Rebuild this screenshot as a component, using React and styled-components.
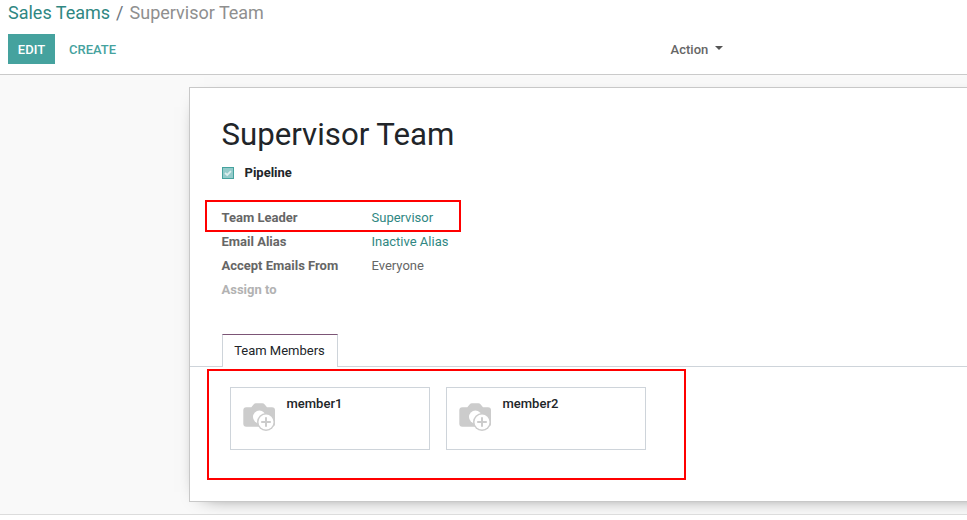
import React from "react";
import styled, { createGlobalStyle } from "styled-components";

const GlobalStyle = createGlobalStyle`
  *, *::before, *::after { box-sizing: border-box; }
  body {
    margin: 0;
    overflow: hidden;
    background: #fff;
    color: #666;
    font: 400 13px/20px Roboto, "Open Sans", sans-serif;
  }
`;

const Page = styled.div`
  height: 520px;
  display: flex;
  flex-direction: column;
  overflow: hidden;
`;

const ControlPanel = styled.header`
  height: 75px;
  flex: none;
  padding: 0 8px;
  border-bottom: 1px solid #cacaca;
`;

const Breadcrumb = styled.nav`
  height: 34px;
  display: flex;
  gap: 6px;
  font-size: 18px;
  line-height: 25px;
  white-space: pre;
  color: #6c757d;
`;

const Crumb = styled.span`
  color: ${(p) => (p.$current ? "#8f8f8f" : "#2f8782")};
`;

const Toolbar = styled.div`
  display: grid;
  grid-template-columns: 47px auto 1fr;
  align-items: center;
  height: 30px;
`;

const Button = styled.button`
  height: 30px;
  padding: 2px ${(p) => (p.$primary ? "0" : "14px")} 0;
  border: 0;
  background: ${(p) => (p.$primary ? "#45a29e" : "transparent")};
  color: ${(p) => (p.$primary ? "#fff" : "#45a29e")};
  font: 500 13px/28px Roboto, sans-serif;
  text-transform: uppercase;
`;

const ActionMenu = styled.button`
  justify-self: start;
  margin-left: 540.5px;
  padding: 2px 0 0;
  border: 0;
  display: flex;
  align-items: center;
  gap: 6.5px;
  background: transparent;
  color: #666;
  font: 500 13px/20px Roboto, sans-serif;
`;

const Caret = styled.span`
  margin-top: -5px;
  border: 4px solid transparent;
  border-top-color: #555;
  border-bottom: 0;
`;

const Content = styled.main`
  height: 440px;
  flex: none;
  padding: 12px 0 0 189px;
  overflow: hidden;
  background: #f9f9f9;
  border-bottom: 1px solid #dcdcdc;
`;

const Sheet = styled.section`
  position: relative;
  width: 1140px;
  height: 415px;
  padding-top: 30px;
  border: 1px solid #c8c8c8;
  background: #fff;
  box-shadow: 0 5px 20px -15px #000;
`;

const Title = styled.h1`
  margin: 0 0 0 31.5px;
  font-size: 31.2px;
  font-weight: 400;
  line-height: 34px;
  color: #212529;
`;

const Option = styled.label`
  display: flex;
  align-items: center;
  gap: 10.5px;
  height: 20px;
  margin: 11px 0 0 32px;
  color: #212529;
  font-weight: 700;
`;

const CheckBox = styled.span`
  width: 12px;
  height: 12px;
  display: flex;
  border: 1px solid #45a29e;
  background: #93cbca;
`;

const Fields = styled.dl`
  display: grid;
  grid-template-columns: 150px 1fr;
  grid-auto-rows: 24px;
  margin: 23px 0 0 31.5px;
  line-height: 24px;
`;

const FieldLabel = styled.dt`
  font-weight: 700;
  color: ${(p) => (p.$muted ? "#b2b2b2" : "#666")};
`;

const FieldValue = styled.dd`
  margin: 0;
  color: ${(p) => (p.$link ? "#2f8782" : "#666")};
`;

const Tabs = styled.div`
  display: flex;
  height: 33px;
  margin-top: 32px;
  padding-left: 32px;
  border-bottom: 1px solid #ced4da;
`;

const Tab = styled.div`
  width: 116px;
  height: 33px;
  padding-right: 1px;
  border: 1px solid #ced4da;
  border-top-color: #7c5576;
  border-bottom: 0;
  background: #fff;
  color: #212529;
  line-height: 32px;
  text-align: center;
`;

const Members = styled.div`
  display: flex;
  gap: 16px;
  padding: 20px 40px;
`;

const MemberCard = styled.article`
  width: 200px;
  height: 63px;
  display: flex;
  gap: 10.5px;
  padding: 7px 12px;
  border: 1px solid #ced4da;
  color: #212529;
  font-weight: 500;
  line-height: 18px;

  svg { flex: none; margin-top: 8px; }
`;

const Highlight = styled.div`
  position: absolute;
  left: ${(p) => p.$x}px;
  top: ${(p) => p.$y}px;
  width: ${(p) => p.$w}px;
  height: ${(p) => p.$h}px;
  border: 2px solid #f00;
  pointer-events: none;
`;

const CameraPlus = () => (
  <svg width="33" height="29" viewBox="0 0 33 29">
    <path
      d="M3.3 4.2H8.3L10.8 1.2Q11.6.3 12.8.3H19.5Q20.7.3 21.5 1.2L24 4.2H29Q32 4.2 32 7.2V20.7Q32 23.7 29 23.7H3.3Q.3 23.7 .3 20.7V7.2Q.3 4.2 3.3 4.2Z"
      fill="#ccc"
    />
    <circle cx="16.4" cy="14" r="6.4" fill="#fff" />
    <circle cx="23" cy="19" r="9" fill="#ccc" />
    <circle cx="23" cy="19" r="7.5" fill="#fff" />
    <path d="M23 14.2V23.8M18.2 19H27.8" stroke="#ccc" strokeWidth="2" />
  </svg>
);

const fields = [
  { label: "Team Leader", value: "Supervisor", link: true },
  { label: "Email Alias", value: "Inactive Alias", link: true },
  { label: "Accept Emails From", value: "Everyone" },
  { label: "Assign to", value: "", muted: true },
];

export default function App() {
  return (
    <Page>
      <GlobalStyle />
      <ControlPanel>
        <Breadcrumb>
          <Crumb>Sales Teams</Crumb>
          <span>/</span>
          <Crumb $current>Supervisor Team</Crumb>
        </Breadcrumb>
        <Toolbar>
          <Button $primary>Edit</Button>
          <Button>Create</Button>
          <ActionMenu>Action<Caret /></ActionMenu>
        </Toolbar>
      </ControlPanel>
      <Content>
        <Sheet>
          <Title>Supervisor Team</Title>
          <Option>
            <CheckBox>
              <svg width="10" height="10" viewBox="0 0 10 10">
                <path d="M2 5L4.2 7L8 3.2" fill="none" stroke="#dceeee" strokeWidth="1.8" />
              </svg>
            </CheckBox>
            Pipeline
          </Option>
          <Fields>
            {fields.map((f) => (
              <React.Fragment key={f.label}>
                <FieldLabel $muted={f.muted}>{f.label}</FieldLabel>
                <FieldValue $link={f.link}>{f.value}</FieldValue>
              </React.Fragment>
            ))}
          </Fields>
          <Tabs><Tab>Team Members</Tab></Tabs>
          <Members>
            {["member1", "member2"].map((name) => (
              <MemberCard key={name}><CameraPlus />{name}</MemberCard>
            ))}
          </Members>
          <Highlight $x={15} $y={112} $w={256} $h={32} />
          <Highlight $x={17} $y={281} $w={479} $h={111} />
        </Sheet>
      </Content>
    </Page>
  );
}
